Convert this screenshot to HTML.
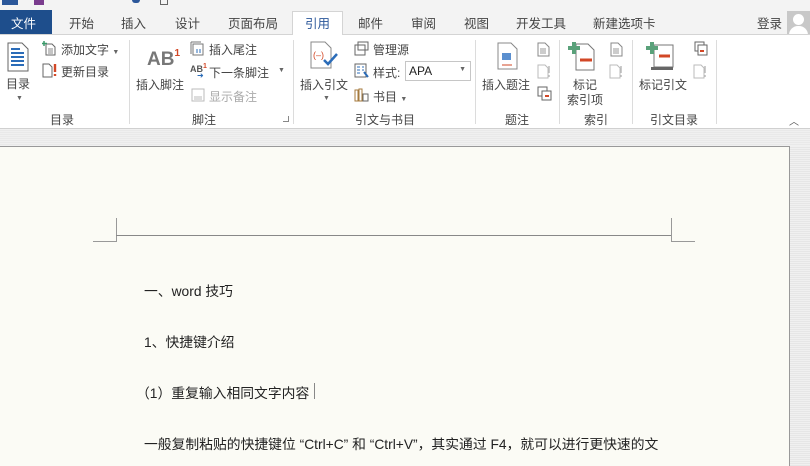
<!DOCTYPE html>
<html><head><meta charset="utf-8"><style>
*{margin:0;padding:0;box-sizing:border-box}
body{width:810px;height:466px;overflow:hidden;background:#fff;font-family:"Liberation Sans","Noto Sans CJK SC",sans-serif;position:relative;color:#444}
.a{position:absolute;white-space:nowrap}
.tab{font-size:12.5px;color:#444;top:13px}
.lbl{font-size:12px;color:#444}
.grp{font-size:12px;color:#444;top:111px}
.sep{position:absolute;top:40px;width:1px;height:84px;background:#dcdcdc}
.doc{font-size:13.8px;color:#222}
.ic{position:absolute}
</style></head><body>
<div class="a" style="left:0;top:0;width:810px;height:10px;background:#f3f3f3"></div>
<div class="a" style="left:2px;top:0;width:16px;height:5px;background:#2b579a"></div>
<div class="a" style="left:34px;top:0;width:10px;height:5px;background:#7a3c8e"></div>
<div class="a" style="left:132px;top:0;width:8px;height:3px;background:#2b579a;border-radius:0 0 4px 4px"></div>
<div class="a" style="left:160px;top:0;width:8px;height:5px;border:1px solid #666;border-top:none"></div>
<div class="a" style="left:0;top:10px;width:810px;height:24px;background:#f3f3f3"></div>
<div class="a" style="left:0;top:10px;width:52px;height:24px;background:#1e4e8c"></div>
<div class="a tab" style="left:11px;color:#fff">文件</div>
<div class="a tab" style="left:69px">开始</div>
<div class="a tab" style="left:121px">插入</div>
<div class="a tab" style="left:175px">设计</div>
<div class="a tab" style="left:228px">页面布局</div>
<div class="a" style="left:292px;top:11px;width:51px;height:24px;background:#fff;border:1px solid #d4d4d4;border-bottom:none"></div>
<div class="a tab" style="left:305px;color:#2b579a">引用</div>
<div class="a tab" style="left:358px">邮件</div>
<div class="a tab" style="left:411px">审阅</div>
<div class="a tab" style="left:464px">视图</div>
<div class="a tab" style="left:516px">开发工具</div>
<div class="a tab" style="left:593px">新建选项卡</div>
<div class="a tab" style="left:757px">登录</div>
<div class="a" style="left:787px;top:11px;width:23px;height:23px;background:#c8c8c8;overflow:hidden"><div style="position:absolute;left:6px;top:3px;width:11px;height:11px;border-radius:50%;background:#fff"></div><div style="position:absolute;left:2px;top:15px;width:19px;height:12px;border-radius:9px 9px 0 0;background:#fff"></div></div>
<div class="a" style="left:0;top:34px;width:292px;height:1px;background:#d4d4d4"></div>
<div class="a" style="left:343px;top:34px;width:467px;height:1px;background:#d4d4d4"></div>
<div class="a" style="left:0;top:35px;width:810px;height:93px;background:#fff"></div>
<div class="sep" style="left:129px"></div><div class="sep" style="left:293px"></div><div class="sep" style="left:475px"></div><div class="sep" style="left:559px"></div><div class="sep" style="left:632px"></div><div class="sep" style="left:716px"></div>
<svg class="ic" style="left:7px;top:42px" width="22" height="30"><path d="M1 1h14l6 6v22H1z" fill="#fff" stroke="#666"/><path d="M4 7h9M4 11h13M4 15h13M4 19h13M4 23h13" stroke="#2b6cb8" stroke-width="2"/></svg>
<div class="a lbl" style="left:6px;top:75px">目录</div>
<div class="a" style="left:16px;top:95px;font-size:7px;color:#666">▼</div>
<svg class="ic" style="left:42px;top:41px" width="14" height="15"><path d="M4 3h6l3 3v8H4z" fill="#fff" stroke="#666"/><path d="M6 8h5M6 10h5M6 12h5" stroke="#888"/><path d="M2 0v5M0 2.5h5" stroke="#3a9a6a" stroke-width="1.5"/></svg>
<div class="a lbl" style="left:61px;top:41px">添加文字 <span style="font-size:7px;color:#666">▼</span></div>
<svg class="ic" style="left:42px;top:63px" width="16" height="15"><path d="M1 1h6l3 3v10H1z" fill="#fff" stroke="#666"/><path d="M13 1v8M13 11v2" stroke="#d24726" stroke-width="2.4"/></svg>
<div class="a lbl" style="left:61px;top:63px">更新目录</div>
<div class="a grp" style="left:50px">目录</div>
<div class="a" style="left:147px;top:48px;font-size:19px;font-weight:bold;color:#777">AB<sup style="color:#d24726;font-size:10px;vertical-align:9px">1</sup></div>
<div class="a lbl" style="left:136px;top:76px">插入脚注</div>
<svg class="ic" style="left:190px;top:41px" width="16" height="15"><path d="M1 1h10M1 1v12M3 3h10v11H3z" fill="none" stroke="#777"/><path d="M7 8v4M10 8v4" stroke="#2b6cb8"/></svg>
<div class="a lbl" style="left:209px;top:41px">插入尾注</div>
<div class="a" style="left:190px;top:63px;font-size:9px;font-weight:bold;color:#555">AB<sup style="color:#d24726;font-size:7px">1</sup></div>
<div class="a" style="left:197px;top:71px;font-size:8px;color:#2b6cb8">➜</div>
<div class="a lbl" style="left:209px;top:64px">下一条脚注</div>
<div class="a" style="left:278px;top:67px;font-size:7px;color:#666">▼</div>
<svg class="ic" style="left:191px;top:88px" width="14" height="14"><rect x="1" y="1" width="12" height="12" fill="#fff" stroke="#bbb"/><path d="M3 9h8M3 11h8" stroke="#bbb"/></svg>
<div class="a lbl" style="left:209px;top:88px;color:#aaa">显示备注</div>
<div class="a grp" style="left:192px">脚注</div>
<div class="a" style="left:283px;top:116px;width:6px;height:6px;border-right:1px solid #888;border-bottom:1px solid #888"></div>
<svg class="ic" style="left:310px;top:41px" width="30" height="30"><path d="M1 1h14l6 6v20H1z" fill="#fff" stroke="#888"/><text x="3" y="17" font-size="9" fill="#d24726" font-family="Liberation Sans">(–)</text><path d="M14 19l4 4 9-10" fill="none" stroke="#2b6cb8" stroke-width="2.5"/></svg>
<div class="a lbl" style="left:300px;top:76px">插入引文</div>
<div class="a" style="left:323px;top:95px;font-size:7px;color:#666">▼</div>
<svg class="ic" style="left:354px;top:41px" width="16" height="15"><path d="M4 1h10v8H4zM1 4h10v10H1z" fill="#fff" stroke="#666"/></svg>
<div class="a lbl" style="left:373px;top:41px">管理源</div>
<svg class="ic" style="left:354px;top:63px" width="16" height="15"><path d="M1 1h11v13H1z" fill="#fff" stroke="#666"/><path d="M3 4h3M3 7h3M3 10h3M8 4h2M8 7h2" stroke="#2b6cb8"/><path d="M10 9l4 5" stroke="#2b6cb8" stroke-width="2"/></svg>
<div class="a lbl" style="left:373px;top:64px">样式:</div>
<div class="a" style="left:405px;top:61px;width:66px;height:20px;border:1px solid #c6c6c6;background:#fff"><span style="position:absolute;left:3px;top:2px;font-size:12px;color:#222">APA</span><span style="position:absolute;right:4px;top:4px;font-size:7px;color:#666">▼</span></div>
<svg class="ic" style="left:354px;top:87px" width="16" height="15"><path d="M1 3h3v11H1zM5 2h3v12H5z" fill="#fff" stroke="#a57a3c"/><path d="M9 7h5v7H9z" fill="#fff" stroke="#666"/></svg>
<div class="a lbl" style="left:373px;top:88px">书目 <span style="font-size:7px;color:#666">▼</span></div>
<div class="a grp" style="left:355px">引文与书目</div>
<svg class="ic" style="left:497px;top:42px" width="22" height="28"><path d="M1 1h13l6 6v20H1z" fill="#fff" stroke="#888"/><rect x="5" y="11" width="9" height="7" fill="#5b8fcf"/><path d="M5 23h10" stroke="#d24726"/></svg>
<div class="a lbl" style="left:482px;top:76px">插入题注</div>
<svg class="ic" style="left:537px;top:42px" width="13" height="15"><path d="M1 1h7l4 4v9H1z" fill="#fff" stroke="#888"/><path d="M3 7h6M3 9h6M3 11h6" stroke="#999"/></svg>
<svg class="ic" style="left:537px;top:64px" width="14" height="15"><path d="M1 1h7l3 3v10H1z" fill="#fff" stroke="#bbb"/><path d="M12 2v7M12 11v2" stroke="#bbb" stroke-width="1.5"/></svg>
<svg class="ic" style="left:537px;top:86px" width="15" height="15"><rect x="1" y="1" width="9" height="9" fill="#fff" stroke="#666"/><rect x="5" y="5" width="9" height="9" fill="#fff" stroke="#666"/><path d="M8 10h4" stroke="#d24726" stroke-width="2"/></svg>
<div class="a grp" style="left:505px">题注</div>
<svg class="ic" style="left:568px;top:42px" width="30" height="30"><path d="M8 2h12l6 6v20H8z" fill="#fff" stroke="#777"/><path d="M6 0v12M0 6h12" stroke="#5aa17a" stroke-width="4"/><path d="M12 18h12" stroke="#d24726" stroke-width="3"/></svg>
<div class="a lbl" style="left:573px;top:76px">标记</div>
<div class="a lbl" style="left:567px;top:91px">索引项</div>
<svg class="ic" style="left:610px;top:42px" width="13" height="15"><path d="M1 1h7l4 4v9H1z" fill="#fff" stroke="#888"/><path d="M3 7h6M3 9h6M3 11h6" stroke="#999"/></svg>
<svg class="ic" style="left:609px;top:64px" width="14" height="15"><path d="M1 1h7l3 3v10H1z" fill="#fff" stroke="#bbb"/><path d="M12 2v7M12 11v2" stroke="#bbb" stroke-width="1.5"/></svg>
<div class="a grp" style="left:584px">索引</div>
<svg class="ic" style="left:646px;top:42px" width="30" height="30"><path d="M8 3h19v22H8z" fill="#fff" stroke="#777"/><path d="M5 25h22v3H5z" fill="#666"/><path d="M6 0v12M0 6h12" stroke="#5aa17a" stroke-width="4"/><path d="M13 14h11" stroke="#d24726" stroke-width="3"/></svg>
<div class="a lbl" style="left:639px;top:76px">标记引文</div>
<svg class="ic" style="left:694px;top:41px" width="15" height="15"><rect x="1" y="1" width="9" height="9" fill="#fff" stroke="#666"/><rect x="4" y="4" width="9" height="10" fill="#fff" stroke="#666"/><path d="M6 10h4" stroke="#d24726" stroke-width="2"/></svg>
<svg class="ic" style="left:693px;top:64px" width="14" height="15"><path d="M1 1h7l3 3v10H1z" fill="#fff" stroke="#bbb"/><path d="M12 2v7M12 11v2" stroke="#bbb" stroke-width="1.5"/></svg>
<div class="a grp" style="left:650px">引文目录</div>
<div class="a" style="left:789px;top:113px;font-size:10px;color:#555">︿</div>
<div class="a" style="left:0;top:128px;width:810px;height:1px;background:#d0d0d0"></div>
<div class="a" style="left:0;top:129px;width:810px;height:17px;background:repeating-linear-gradient(#f0f0f0 0 1px,#e9e9e9 1px 2px)"></div>
<div class="a" style="left:790px;top:146px;width:20px;height:320px;background:repeating-linear-gradient(#f0f0f0 0 1px,#e6e6e6 1px 2px)"></div>
<div class="a" style="left:0;top:146px;width:790px;height:320px;background:#fbfbf5;border-top:1px solid #999;border-right:1px solid #999"></div>
<div class="a" style="left:116px;top:218px;width:1px;height:24px;background:#999"></div>
<div class="a" style="left:93px;top:241px;width:24px;height:1px;background:#999"></div>
<div class="a" style="left:116px;top:235px;width:556px;height:1px;background:#888"></div>
<div class="a" style="left:671px;top:218px;width:1px;height:24px;background:#999"></div>
<div class="a" style="left:671px;top:241px;width:24px;height:1px;background:#999"></div>
<div class="a doc" style="left:144px;top:280px">一、word 技巧</div>
<div class="a doc" style="left:144px;top:331px">1、快捷键介绍</div>
<div class="a doc" style="left:136px;top:382px">（1）重复输入相同文字内容</div>
<div class="a" style="left:314px;top:383px;width:1px;height:16px;background:#888"></div>
<div class="a doc" style="left:144px;top:433px">一般复制粘贴的快捷键位 “Ctrl+C” 和 “Ctrl+V”，其实通过 F4，就可以进行更快速的文</div>
</body></html>
